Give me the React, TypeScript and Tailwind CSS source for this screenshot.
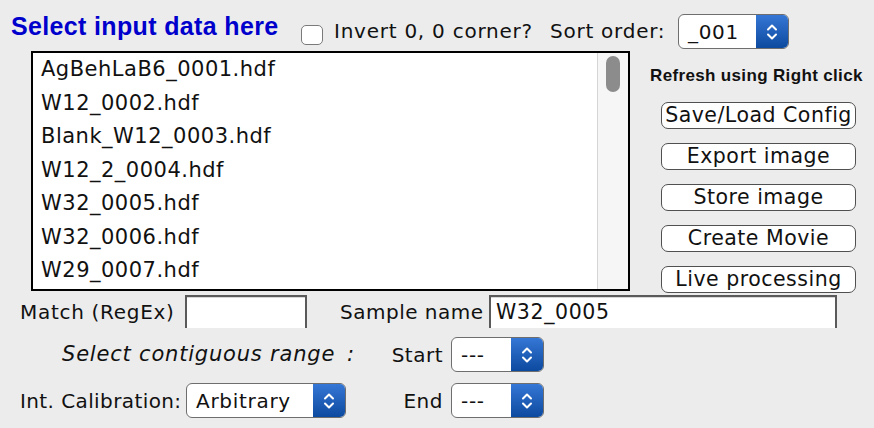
import React from 'react';

const FILES = [
  'AgBehLaB6_0001.hdf',
  'W12_0002.hdf',
  'Blank_W12_0003.hdf',
  'W12_2_0004.hdf',
  'W32_0005.hdf',
  'W32_0006.hdf',
  'W29_0007.hdf',
];

const BUTTONS = ['Save/Load Config', 'Export image', 'Store image', 'Create Movie', 'Live processing'];

function Stepper() {
  return (
    <svg width="12" height="20" viewBox="0 0 12 20" fill="none" stroke="white" strokeWidth="2" strokeLinecap="round" strokeLinejoin="round">
      <path d="M2 7.5 L6 3.5 L10 7.5" />
      <path d="M2 12.5 L6 16.5 L10 12.5" />
    </svg>
  );
}

function Popup({ label, className }: { label: string; className: string }) {
  return (
    <div className={`flex h-[35px] shrink-0 overflow-hidden rounded-[6px] border border-[#6e6e6e] bg-white ${className}`}>
      <div className="flex flex-1 items-center pl-[9px] text-[20px] tracking-[0.7px] whitespace-nowrap">{label}</div>
      <div className="flex w-[32px] items-center justify-center bg-gradient-to-b from-[#3577d6] to-[#0b4a9f]">
        <Stepper />
      </div>
    </div>
  );
}

function TextField({ value, className }: { value?: string; className: string }) {
  return (
    <div className={`h-[33px] shrink-0 border-x-2 border-t-2 border-[#5a5a5a] bg-white shadow-[inset_0_1px_0_#d8d8d8] flex items-center pl-[5px] text-[20.5px] tracking-[0.6px] ${className}`}>
      {value}
    </div>
  );
}

export default function App() {
  return (
    <div className="h-[428px] w-[874px] overflow-hidden bg-[#ececec] text-[#111] font-['DejaVu_Sans','Liberation_Sans',sans-serif]">
      {/* header row */}
      <div className="flex h-[51px] items-start">
        <div className="mt-[11px] w-[301px] pl-[11px] whitespace-nowrap text-[25px] leading-[30px] font-bold tracking-[0.35px] text-[#0000cc] font-['Liberation_Sans',Arial,sans-serif]">
          Select input data here
        </div>
        <div className="mt-[25px] h-[20px] w-[22px] shrink-0 rounded-[5px] border-[1.5px] border-[#7a7a7a] bg-white" />
        <div className="mt-[19px] ml-[11px] w-[216px] whitespace-nowrap text-[20px] leading-[24px] tracking-[0.75px]">Invert 0, 0 corner?</div>
        <div className="mt-[19px] w-[128px] whitespace-nowrap text-[20px] leading-[24px] tracking-[0.75px]">Sort order:</div>
        <Popup label="_001" className="mt-[14px] w-[111px]" />
      </div>

      {/* list + buttons */}
      <div className="flex">
        <div className="ml-[31px] flex h-[240px] w-[599px] border-2 border-black bg-white">
          <div className="flex-1">
            {FILES.map((f) => (
              <div key={f} className="flex h-[33.5px] items-center pl-[8px] text-[21px] tracking-[0.5px] whitespace-nowrap">
                {f}
              </div>
            ))}
          </div>
          <div className="w-[31px] border-l border-[#d6d6d6] bg-[#f6f6f6] pt-[3px] pl-[8px]">
            <div className="h-[36px] w-[14px] rounded-full bg-[#8c8c8c]" />
          </div>
        </div>
        <div className="flex flex-col">
          <div className="mt-[15px] ml-[20px] whitespace-nowrap text-[17px] leading-[20px] font-bold tracking-[0.35px] font-['Liberation_Sans',Arial,sans-serif]">
            Refresh using Right click
          </div>
          <div className="mt-[16px] ml-[31px] flex flex-col gap-[14px]">
            {BUTTONS.map((b) => (
              <div
                key={b}
                className="flex h-[27px] w-[195px] items-center justify-center overflow-hidden whitespace-nowrap rounded-[7px] border-[1.5px] border-[#505050] bg-white text-[20.5px] tracking-[0.5px]"
              >
                {b}
              </div>
            ))}
          </div>
        </div>
      </div>

      {/* match / sample name */}
      <div className="mt-[2px] flex items-center">
        <div className="w-[185px] pl-[20px] whitespace-nowrap text-[20px] tracking-[0.7px]">Match (RegEx)</div>
        <TextField className="w-[122px]" />
        <div className="w-[182px] pl-[33px] whitespace-nowrap text-[20px] tracking-[0.5px]">Sample name</div>
        <TextField value="W32_0005" className="w-[348px]" />
      </div>

      {/* range start */}
      <div className="mt-[9px] flex items-center">
        <div className="flex w-[358px] justify-between pl-[62px] text-[21px] italic tracking-[0.8px] whitespace-nowrap">
          <span>Select contiguous range</span>
          <span className="pr-[3px]">:</span>
        </div>
        <div className="w-[85px] text-right text-[20px] tracking-[0.5px]">Start</div>
        <Popup label="---" className="ml-[8px] w-[93px]" />
      </div>

      {/* calibration / end */}
      <div className="mt-[11px] flex items-center">
        <div className="w-[186px] pl-[20px] whitespace-nowrap text-[20px] tracking-[0.4px]">Int. Calibration:</div>
        <Popup label="Arbitrary" className="w-[160px]" />
        <div className="w-[97px] text-right text-[20px] tracking-[0.5px]">End</div>
        <Popup label="---" className="ml-[8px] w-[93px]" />
      </div>
    </div>
  );
}
